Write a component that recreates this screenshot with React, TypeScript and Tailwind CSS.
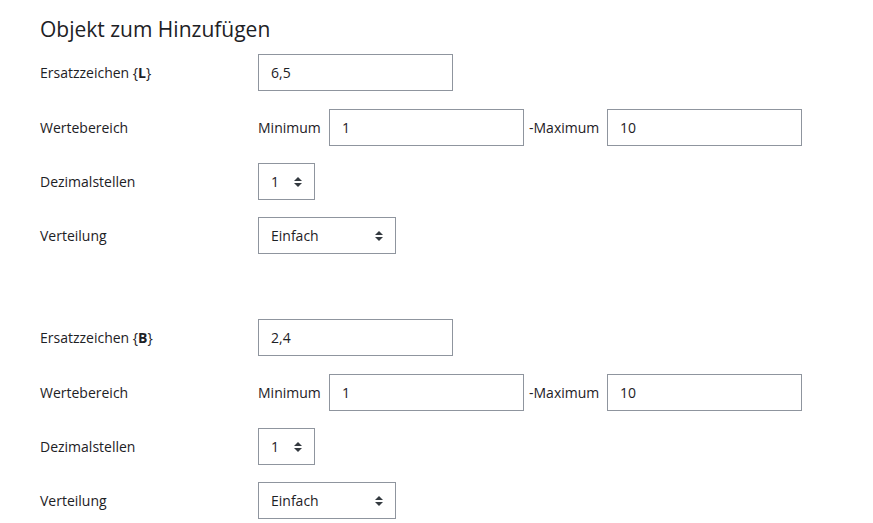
import React from "react";

const font = { fontFamily: '"Open Sans", "Noto Sans", sans-serif' };

function Arrow() {
  return (
    <svg width="8" height="10" viewBox="0 0 4 5" className="absolute right-[12px] top-1/2 -translate-y-1/2">
      <path fill="#343a40" d="M2 0L0 2h4zm0 5L0 3h4z" />
    </svg>
  );
}

function TextInput({ value, w }: { value: string; w: string }) {
  return (
    <div className={`h-[37px] ${w} shrink-0 border border-[#8f959e] bg-white flex items-center pl-[12px] text-[#1d2125]`}>
      {value}
    </div>
  );
}

function Select({ value, w }: { value: string; w: string }) {
  return (
    <div className={`relative h-[37px] ${w} shrink-0 border border-[#8f959e] bg-white flex items-center pl-[12px] text-[#1d2125]`}>
      {value}
      <Arrow />
    </div>
  );
}

function Row({ label, children, className = "" }: { label: React.ReactNode; children: React.ReactNode; className?: string }) {
  return (
    <div className={`flex items-center h-[37px] ${className}`}>
      <div className="w-[218px] shrink-0 whitespace-nowrap">{label}</div>
      <div className="flex items-center">{children}</div>
    </div>
  );
}

function Group({ letter, val, first }: { letter: string; val: string; first?: boolean }) {
  return (
    <div className={first ? "" : "mt-[65px]"}>
      <Row label={<span>Ersatzzeichen {"{"}<b className="font-bold">{letter}</b>{"}"}</span>}>
        <TextInput value={val} w="w-[195px]" />
      </Row>
      <Row label="Wertebereich" className="mt-[17.5px]">
        <span className="w-[71px] shrink-0 whitespace-nowrap">Minimum</span>
        <TextInput value="1" w="w-[195px]" />
        <span className="w-[83px] shrink-0 whitespace-nowrap pl-[5px]">-Maximum</span>
        <TextInput value="10" w="w-[195px]" />
      </Row>
      <Row label="Dezimalstellen" className="mt-[17.5px]">
        <Select value="1" w="w-[57px]" />
      </Row>
      <Row label="Verteilung" className="mt-[17px]">
        <Select value="Einfach" w="w-[138px]" />
      </Row>
    </div>
  );
}

export default function App() {
  return (
    <div className="w-[873px] h-[523px] overflow-hidden bg-white text-[14px] text-[#1d2125] pl-[40px]" style={font}>
      <h3 className="text-[21px] leading-[28px] pt-[15px] h-[54px] font-normal">Objekt zum Hinzufügen</h3>
      <Group letter="L" val="6,5" first />
      <Group letter="B" val="2,4" />
    </div>
  );
}
